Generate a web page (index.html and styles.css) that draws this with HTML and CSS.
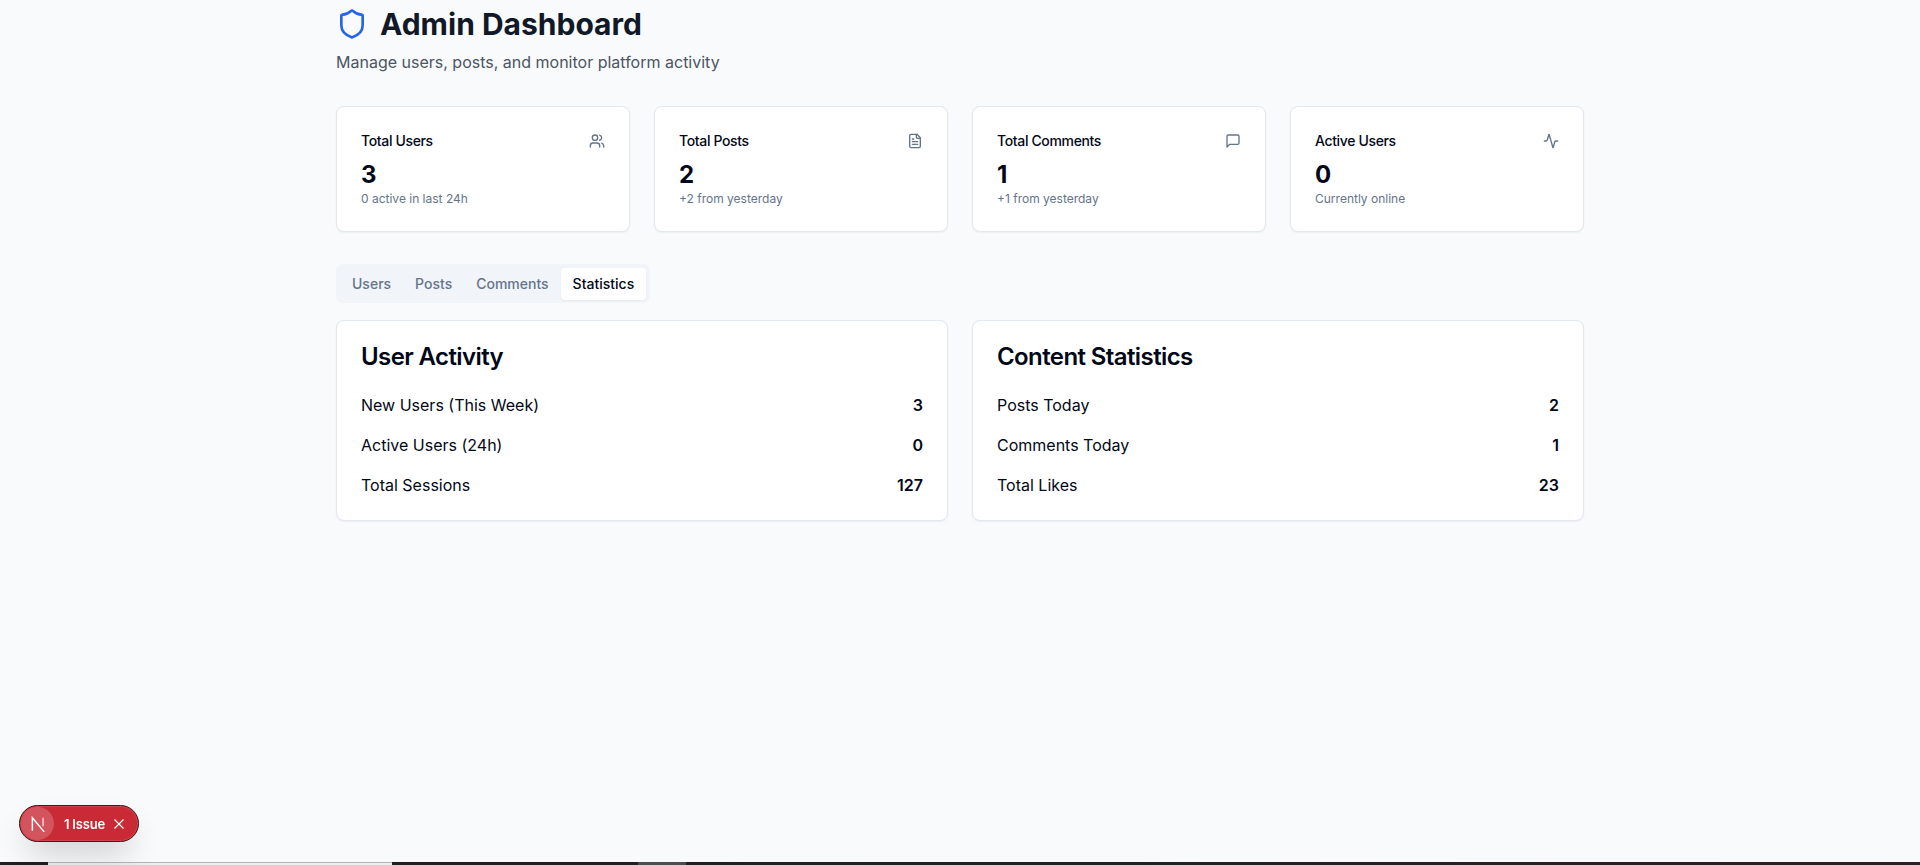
FILE: index.html
```html
<!DOCTYPE html>
<html lang="en">
<head>
<meta charset="utf-8">
<title>Admin Dashboard</title>
<link rel="stylesheet" href="styles.css">
</head>
<body>
<main class="page">
  <header class="head">
    <div class="title-row">
      <svg class="shield" viewBox="0 0 24 24"><path d="M20 13c0 5-3.5 7.5-7.66 8.95a1 1 0 0 1-.67-.01C7.5 20.5 4 18 4 13V6a1 1 0 0 1 1-1c2 0 4.5-1.2 6.24-2.72a1.17 1.17 0 0 1 1.52 0C14.51 3.81 17 5 19 5a1 1 0 0 1 1 1z"/></svg>
      <h1 class="title">Admin Dashboard</h1>
    </div>
    <p class="subtitle">Manage users, posts, and monitor platform activity</p>
  </header>

  <section class="stats">
    <article class="card stat">
      <div class="stat-top"><h3 class="stat-label">Total Users</h3>
        <svg class="icon" viewBox="0 0 24 24"><path d="M16 21v-2a4 4 0 0 0-4-4H6a4 4 0 0 0-4 4v2"/><circle cx="9" cy="7" r="4"/><path d="M22 21v-2a4 4 0 0 0-3-3.87"/><path d="M16 3.13a4 4 0 0 1 0 7.75"/></svg></div>
      <div class="stat-value">3</div>
      <p class="stat-note">0 active in last 24h</p>
    </article>
    <article class="card stat">
      <div class="stat-top"><h3 class="stat-label">Total Posts</h3>
        <svg class="icon" viewBox="0 0 24 24"><path d="M15 2H6a2 2 0 0 0-2 2v16a2 2 0 0 0 2 2h12a2 2 0 0 0 2-2V7Z"/><path d="M14 2v4a2 2 0 0 0 2 2h4"/><path d="M10 9H8"/><path d="M16 13H8"/><path d="M16 17H8"/></svg></div>
      <div class="stat-value">2</div>
      <p class="stat-note">+2 from yesterday</p>
    </article>
    <article class="card stat">
      <div class="stat-top"><h3 class="stat-label">Total Comments</h3>
        <svg class="icon" viewBox="0 0 24 24"><path d="M21 15a2 2 0 0 1-2 2H7l-4 4V5a2 2 0 0 1 2-2h14a2 2 0 0 1 2 2z"/></svg></div>
      <div class="stat-value">1</div>
      <p class="stat-note">+1 from yesterday</p>
    </article>
    <article class="card stat">
      <div class="stat-top"><h3 class="stat-label">Active Users</h3>
        <svg class="icon" viewBox="0 0 24 24"><path d="M22 12h-2.48a2 2 0 0 0-1.93 1.46l-2.35 8.36a.25.25 0 0 1-.48 0L9.24 2.18a.25.25 0 0 0-.48 0l-2.35 8.36A2 2 0 0 1 4.49 12H2"/></svg></div>
      <div class="stat-value">0</div>
      <p class="stat-note">Currently online</p>
    </article>
  </section>

  <nav class="tabs">
    <span class="tab">Users</span>
    <span class="tab">Posts</span>
    <span class="tab">Comments</span>
    <span class="tab tab-active">Statistics</span>
  </nav>

  <section class="panels">
    <article class="card panel">
      <h2 class="panel-title">User Activity</h2>
      <div class="rows">
        <div class="row"><span>New Users (This Week)</span><strong class="row-value">3</strong></div>
        <div class="row"><span>Active Users (24h)</span><strong class="row-value">0</strong></div>
        <div class="row"><span>Total Sessions</span><strong class="row-value">127</strong></div>
      </div>
    </article>
    <article class="card panel">
      <h2 class="panel-title">Content Statistics</h2>
      <div class="rows">
        <div class="row"><span>Posts Today</span><strong class="row-value">2</strong></div>
        <div class="row"><span>Comments Today</span><strong class="row-value">1</strong></div>
        <div class="row"><span>Total Likes</span><strong class="row-value">23</strong></div>
      </div>
    </article>
  </section>
</main>

<div class="issue-badge">
  <span class="issue-logo"><svg viewBox="0 0 16 16"><path d="M3 14V2.5L13.5 15"/><path d="M12.5 2.5V10" class="fade"/></svg></span>
  <span class="issue-text">1 Issue</span>
  <svg class="issue-close" viewBox="0 0 12 12"><path d="M1.5 1.5l9 9M10.5 1.5l-9 9"/></svg>
</div>

<footer class="strip">
  <span class="seg seg-dark-a"></span>
  <span class="seg seg-light"></span>
  <span class="seg seg-dark-b"></span>
  <span class="seg seg-gray"></span>
  <span class="seg seg-dark-c"></span>
</footer>
</body>
</html>
```
FILE: styles.css
```css
* { box-sizing: border-box; }
html, body { height: 100%; margin: 0; }
body {
  display: flex;
  flex-direction: column;
  overflow: hidden;
  background: #f9fafb;
  color: #020817;
  font-family: Inter, "Liberation Sans", sans-serif;
}
.page {
  flex: 1;
  width: 1248px;
  margin: 0 auto;
  padding-top: 6px;
}
.head { margin-bottom: 32px; }
.title-row { display: flex; align-items: center; gap: 12px; }
.shield {
  width: 32px; height: 32px;
  fill: none; stroke: #2563eb; stroke-width: 2;
  stroke-linecap: round; stroke-linejoin: round;
}
.title { margin: 0; font-size: 30px; line-height: 36px; font-weight: 700; color: #111827; }
.subtitle { margin: 8px 0 0; font-size: 16px; line-height: 24px; color: #4b5563; }
.card {
  background: #fff;
  border: 1px solid #e2e8f0;
  border-radius: 8px;
  box-shadow: 0 1px 2px rgba(0, 0, 0, .05);
}
.stats { display: grid; grid-template-columns: repeat(4, 1fr); gap: 24px; margin-bottom: 32px; }
.stat { padding: 24px; }
.stat-top { display: flex; align-items: center; justify-content: space-between; margin-bottom: 8px; }
.stat-label { margin: 0; font-size: 14px; line-height: 20px; font-weight: 500; letter-spacing: -.35px; }
.icon {
  width: 16px; height: 16px;
  fill: none; stroke: #64748b; stroke-width: 2;
  stroke-linecap: round; stroke-linejoin: round;
}
.stat-value { font-size: 24px; line-height: 32px; font-weight: 700; }
.stat-note { margin: 0; font-size: 12px; line-height: 16px; color: #64748b; }
.tabs {
  display: inline-flex;
  height: 39px;
  padding: 4px 4px 3px;
  background: #f1f5f9;
  border-radius: 6px;
  vertical-align: top;
}
.tab {
  display: flex;
  align-items: center;
  padding: 0 12px 1px;
  font-size: 14px;
  font-weight: 500;
  color: #64748b;
  border-radius: 4px;
}
.tab-active { background: #fff; color: #020817; box-shadow: 0 1px 2px rgba(0, 0, 0, .05); }
.panels { display: grid; grid-template-columns: repeat(2, 1fr); gap: 24px; margin-top: 17px; }
.panel { padding: 24px 24px 23px; }
.panel-title { margin: 0 0 24px; font-size: 24px; line-height: 24px; font-weight: 600; letter-spacing: -.6px; }
.rows { display: flex; flex-direction: column; gap: 16px; }
.row { display: flex; justify-content: space-between; font-size: 16px; line-height: 24px; }
.row-value { font-weight: 600; }
.issue-badge {
  position: fixed;
  left: 19px;
  top: 805px;
  display: flex;
  align-items: center;
  width: 120px;
  height: 37px;
  padding-left: 1px;
  background: #c92a35;
  border: 1px solid #3a1a1c;
  border-radius: 19px;
  box-shadow: inset 0 0 0 1px rgba(255, 255, 255, .12), 0 16px 32px -8px rgba(0, 0, 0, .24);
  color: #fff;
}
.issue-logo {
  display: flex;
  align-items: center;
  justify-content: center;
  flex: none;
  width: 33px;
  height: 33px;
  border-radius: 50%;
  background: rgba(255, 255, 255, .2);
}
.issue-logo svg { width: 18px; height: 18px; fill: none; stroke: #fff; stroke-width: 1.3; }
.issue-logo .fade { stroke-opacity: .75; }
.issue-text { margin-left: 10px; font-size: 13px; line-height: 16px; font-weight: 600; letter-spacing: -.2px; white-space: nowrap; }
.issue-close { flex: none; width: 12px; height: 12px; margin-left: 8px; fill: none; stroke: #fff; stroke-width: 1.2; }
.strip { display: flex; flex: none; height: 3px; background: #222; }
.seg { display: block; height: 100%; }
.seg-dark-a { width: 48px; background: #231f20; }
.seg-light { width: 344px; background: #eeeeee; border-top: 1px solid #b5b5b5; }
.seg-dark-b { width: 246px; background: #231f20; }
.seg-gray { width: 48px; background: #4d4b4b; }
.seg-dark-c { flex: 1; background: linear-gradient(90deg, #231f20, #1f2123 30%, #2a2022 70%, #2b2124); }
```
